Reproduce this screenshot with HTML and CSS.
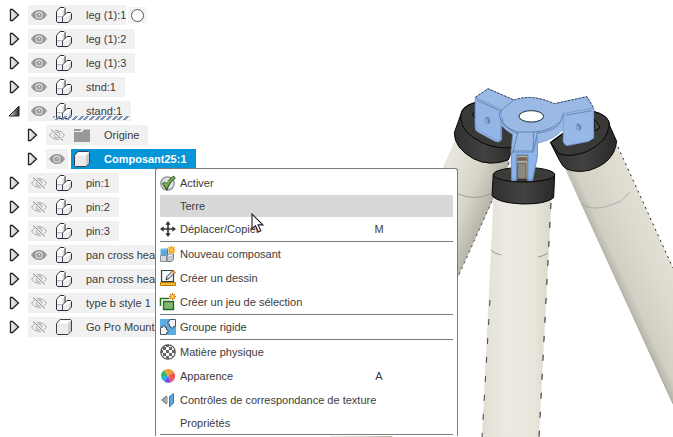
FILE: index.html
```html
<!DOCTYPE html>
<html lang="fr">
<head>
<meta charset="utf-8">
<title>Navigateur de composants</title>
<link rel="stylesheet" href="styles.css">
<script src="app.js" defer></script>
</head>
<body>
<svg width="0" height="0" class="defs" aria-hidden="true">
  <defs>
    <linearGradient id="tri" x2="1"><stop stop-color="#f4f4f4"/><stop offset="1" stop-color="#c4c4c4"/></linearGradient>
    <linearGradient id="dark"><stop stop-color="#eee"/><stop offset="1" stop-color="#222"/></linearGradient>
    <symbol id="closed" viewBox="0 0 12 14"><path d="M2.500 1.500v11h2L10.500 7l-6-5.500z" fill="url(#tri)" stroke="#222" stroke-width="1.300"/></symbol>
    <symbol id="open" viewBox="0 0 12 12"><path d="M11 1v10H1z" fill="url(#dark)" stroke="#222"/></symbol>
    <symbol id="eye" viewBox="0 0 16 12"><path d="M0 6Q3 1 8 1t8 5q-3 5-8 5T0 6z" fill="#999"/><circle cx="8" cy="6" r="3.500" fill="#eee"/><circle cx="8" cy="6" r="2.600" fill="#999"/><circle cx="8.300" cy="5.600" r=".8" fill="#eee"/></symbol>
    <symbol id="eye-off" viewBox="0 0 16 12"><g fill="none" stroke="#a2a2a2"><path d="M.5 6Q3.500 1.500 8 1.500T15.500 6q-3 4.500-7.500 4.500T.5 6z"/><circle cx="8" cy="6" r="2.800"/><path d="M2 .5 14 11.500" stroke="#f1f1f1" stroke-width="2.500"/><path d="M2 .5 14 11.500" stroke="#8d8d8d"/></g></symbol>
    <symbol id="assembly" viewBox="0 0 16 16"><path d="M.5 4.500 4 .5h4l1 1v6l2-2h3.500l1 1V12L12 15.500H1.500l-1-1z" fill="#fff"/><path d="M6.500 4 8.500 2v6l-2 2zM12.500 9.500l2.500-2.500v5l-2.500 3z" fill="#d9dae0"/><path d="M1 10h5v5H1zM7 10h5v5H7z" fill="#ececf1"/><path d="M6.500 10v5M1 9.500h5" stroke="#b5b6bf" fill="none"/><path d="M6.500 15.500V10l2.500-2.500" fill="none" stroke="#4b4b56"/><path d="M.5 4.500 4 .5h4l1 1v6l2-2h3.500l1 1V12L12 15.500H1.500l-1-1z" fill="none" stroke="#2f2f3a"/></symbol>
    <symbol id="body" viewBox="0 0 16 16"><path d="M.5 4.500 4 .5h10.500l1 1V12L12 15.500H1.500l-1-1z" fill="#ebebee" stroke="#3c3c44"/><path d="M1.200 4.500 4.300 1.200H14.500l-2.700 3.300z" fill="#fff"/><path d="m12 4.500 2.900-3v10.300L12 14.800z" fill="#c9cbd0"/></symbol>
    <symbol id="folder" viewBox="0 0 16 14"><path d="M0 4h8l2-2.500h6V14H0zM0 1h7.500L6 3H0z" fill="#999"/></symbol>
  </defs>
</svg>
<main class="workspace">
  <nav class="tree" aria-label="Navigateur">
    <ul id="tree"></ul>
  </nav>
  <svg class="scene" viewBox="330 0 343 437" role="img" aria-label="Trépied">
    <defs>
      <linearGradient id="leg"><stop stop-color="#dfddd2"/><stop offset=".12" stop-color="#e6e3d9"/><stop offset=".4" stop-color="#eceae4"/><stop offset=".75" stop-color="#e8e5db"/><stop offset="1" stop-color="#d9d6c9"/></linearGradient>
      <linearGradient id="legL" gradientUnits="userSpaceOnUse" x1="440" y1="190" x2="495" y2="213"><stop stop-color="#e8e6dc"/><stop offset=".5" stop-color="#d6d3c7"/><stop offset="1" stop-color="#aaa89e"/></linearGradient>
      <linearGradient id="legR" gradientUnits="userSpaceOnUse" x1="590" y1="222" x2="648" y2="195"><stop stop-color="#bbb9ac"/><stop offset=".12" stop-color="#d2d0c4"/><stop offset=".6" stop-color="#dddbd0"/><stop offset="1" stop-color="#e4e1d6"/></linearGradient>
      <linearGradient id="cap"><stop stop-color="#303030"/><stop offset=".5" stop-color="#424242"/><stop offset="1" stop-color="#292929"/></linearGradient>
    </defs>
    <path d="M456 138 433 190 330 437h62l66-160 52-115z" fill="url(#legL)"/>
    <path d="M509 163 458 277" fill="none" stroke="#444" stroke-dasharray="2 4"/>
    <path d="M458 194q16 7 32 0" fill="none" stroke="#8c8a80" stroke-width=".7"/>
    <path d="m566 168 14 32 93 204V268l-56-123z" fill="url(#legR)"/>
    <path d="M566 170 673 404" fill="none" stroke="#8d8c83" stroke-width=".6"/>
    <path d="M618 147 673 268" fill="none" stroke="#222" stroke-dasharray="2 4"/>
    <path d="M581 203q12 11 40-2l9-9" fill="none" stroke="#999" stroke-width=".7"/>
    <path d="M493.500 198 482 437h57l12.500-239z" fill="url(#leg)"/>
    <path d="M551 203 539 437" fill="none" stroke="#222" stroke-dasharray="6 13"/>
    <path d="M490 300 482 437" fill="none" stroke="#444" stroke-dasharray="6 13"/>
    <path d="M491 250q4 4 10 5m37 2q6-1 10-4" fill="none" stroke="#777" stroke-width=".7"/>
    <g transform="translate(440 80) scale(.3333)" stroke="#050505" stroke-width="3" stroke-linejoin="round">
      <path d="M104 68Q65 78 62 105L43 158q-1 45 57 78 49 25 105 4l18-50V110z" fill="url(#cap)"/>
      <path d="M104 68Q62 80 62 112q2 48 68 78 50 20 90 11V85z" fill="#393937"/>
      <path d="M107 92 97 104l9 10" fill="none"/>
      <path d="M460 94q48 12 50 45l20 45q-7 65-83 87-37 8-68-4-12-8-20-25l-28-55z" fill="url(#cap)"/>
      <path d="M460 94q48 12 48 40-4 54-73 83-48 17-80 3l-22-32z" fill="#393937"/>
      <path d="m462 116 18 26-15 11z" fill="#4c4b45"/>
      <path d="m160 282-4 65q18 22 91 25 71 1 94-19l3-70z" fill="url(#cap)"/>
      <ellipse cx="252" cy="284" rx="92" ry="22" fill="#3b3b39"/>
      <path d="M230 225h34v73h-34z" fill="#aaa79c" stroke-width="1.500"/>
      <path d="M233 250h25v46h-25z" fill="#8d8a80" stroke-width="1"/>
      <g stroke="#6f93c4" stroke-width="2">
        <path fill-rule="evenodd" d="m106 52 38-26 78 34q53-20 121 11l98-21 20 34v90l-16 10-60 12q-10 2-15-10v-38q-27 31-78 42v40l-14 72h-15V222h-34v80h-14l-2-85 5-54q-22-11-33-27v42q-4 12-20 6l-50-27q-11-5-10-20zM237 109a37 18 0 1 0 74 0 37 18 0 1 0-74 0z" fill="#9ab9e5"/>
        <path d="m106 52 78 36-3 91q-7 4-16-1l-49-27q-12-8-10-22z" fill="#94b6e6"/>
        <path d="m370 101 91-17v90l-16 10-60 12q-10 2-15-10z" fill="#98b9e8"/>
        <path d="m112 61 70 32m195 13 78-14M187 115q-2 26 47 47m57-2q58-8 72-35m-141-65-36 29q-17 16 3 43 20 18 44 24h48q54-4 80-32 6-9 9-23" fill="none" stroke="#4a6d9b"/>
        <path d="m234 156-14 55v86m61-141-2 57v85M217 213h62m14-58-14 58" fill="none" stroke="#496f9f"/>
        <path d="M229 224v73h-14v-80h64l13-48v60l-15 70h-13v-75z" fill="#8fb4e8" stroke="#5f89c2"/>
        <path d="M234 232h25l4 10h-33z" fill="#74624f" stroke="none"/>
        <ellipse cx="143" cy="121" rx="8" ry="10" fill="#84a9d8"/>
        <ellipse cx="416" cy="141" rx="8" ry="10" fill="#84a9d8"/>
        <path d="M138 113q10 2 9 17M411 134q11 1 10 15" fill="none" stroke="#27496f"/>
      </g>
      <path d="m106 52 38-26 78 34q53-20 121 11l98-21 20 34" fill="none" stroke="#1f3048" stroke-dasharray="7 4" stroke-width="2.500"/>
      <ellipse cx="274" cy="109" rx="37" ry="17" fill="none" stroke="#122" stroke-width="2.500"/>
    </g>
  </svg>

  <div class="menu" role="menu" aria-label="Menu contextuel">
    <button class="item" role="menuitem">
      <svg viewBox="0 0 16 16"><circle cx="7.500" cy="8.500" r="6.700" fill="#dde0e6" stroke="#8d9097" stroke-width="1.300"/><path d="m3.300 7.500 3.300 4.800Q9 5.500 14.800 2" fill="none" stroke="#355c26" stroke-width="3.600"/><path d="m3.800 8 2.800 3.400Q9 5.500 14.300 2.500" fill="none" stroke="#78b64e" stroke-width="2"/></svg>
      <span>Activer</span></button>
    <button class="item item-plain item-hover" role="menuitem"><i></i><span>Terre</span></button>
    <button class="item" role="menuitem">
      <svg viewBox="0 0 16 16"><path d="M8 2v12M2 8h12" stroke="#333" stroke-width="1.600"/><path d="M8 0 5.300 3.700h5.400zM8 16l-2.700-3.700h5.400zM0 8l3.700-2.700v5.400zM16 8l-3.700-2.700v5.400z" fill="#333"/></svg>
      <span>Déplacer/Copier</span><kbd>M</kbd></button>
    <hr>
    <button class="item" role="menuitem">
      <svg viewBox="0 0 16 16"><path d="M.5 3.500 2 2h6v7H.5z" fill="#5ba9e0"/><path d="M.5 3.500 2 2h6L6.500 3.500z" fill="#a9d6f5"/><path d="M7 3.500 8 2.500V8L7 9z" fill="#2e7dbb"/><path d="M.5 9.500h6v6h-6z" fill="#d6dae0" stroke="#8a9099"/><path d="M7 10 9 8h4.500v5.500l-2 2H7z" fill="#c3c8d0" stroke="#777d87"/><path d="M7.500 10 9 8.500h4l-1.500 1.500z" fill="#eef0f3"/><path d="m11.500-1 1 2.300L15 .5 14 3l2 1-2 1 1 2.500-2.500-.8-1 2.300-1-2.300L8 7.500 9 5 7 4l2-1L8 .5l2.500.8z" fill="#f9a51d"/><circle cx="11.500" cy="4" r="1.300" fill="#ffd867"/></svg>
      <span>Nouveau composant</span></button>
    <button class="item" role="menuitem">
      <svg viewBox="0 0 16 16"><path d="M1.500 .5h12v11h-12z" fill="#f4f7fb" stroke="#3a3f46" stroke-width="1.200"/><path d="m6 10 1-3.500L13 .5l2 2-6 6z" fill="#e3e3e3" stroke="#333"/><path d="m12 1.500 1.500-1.500L16 2.500 14.500 4z" fill="#e8932c"/><path d="M.5 12.500h15v3H.5z" fill="#ffd23c" stroke="#b87a05"/><path d="M3 13v1.500m2.500-1.500v1.500m2.500-1.500v1.500m2.500-1.500v1.500m2.500-1.500v1.500" stroke="#b87a05" stroke-width=".7"/></svg>
      <span>Créer un dessin</span></button>
    <button class="item" role="menuitem">
      <svg viewBox="0 0 16 16"><path d="M.5 12V4.500h9" fill="none" stroke="#23731b" stroke-width="1.500"/><path d="M3.500 7.500h10v8h-10z" fill="#82b56d" stroke="#226622" stroke-width="1.300"/><path d="M12.500-1v7M9 2.500h7M10 0l5 5m0-5-5 5" stroke="#d2660f"/><circle cx="12.500" cy="2.500" r="2" fill="#ffd83b" stroke="#d2660f" stroke-width=".7"/></svg>
      <span>Créer un jeu de sélection</span></button>
    <hr>
    <button class="item" role="menuitem">
      <svg viewBox="0 0 16 16"><path d="M0 0h9v8H0z" fill="#5dabe3"/><path d="M6.500 8h9.500v8H6.500z" fill="#5dabe3"/><path d="M9.500.5h6v7h-2V9h-2.500V7.500H9.500V5H8V2.500h1.500zM.5 8.500h2V7H5v1.500h1.500V11H8v2.500H6.500v2h-6z" fill="#f4f5f7" stroke="#4f5862"/></svg>
      <span>Groupe rigide</span></button>
    <hr>
    <button class="item" role="menuitem">
      <svg viewBox="0 0 16 16"><defs><pattern id="check" width="6" height="6" patternUnits="userSpaceOnUse"><path fill="#fff" d="M0 0h6v6H0z"/><path d="M0 0h3v3H0zM3 3h3v3H3z" fill="#666"/></pattern></defs><circle cx="8" cy="8" r="7.200" fill="url(#check)" stroke="#555" stroke-width="1.200"/></svg>
      <span>Matière physique</span></button>
    <button class="item" role="menuitem">
      <svg viewBox="0 0 16 16"><path d="M8 8V1a7 7 0 0 1 6.100 3.500z" fill="#f49a3a"/><path d="m8 8 6.100-3.500a7 7 0 0 1 0 7z" fill="#ef4e4e"/><path d="m8 8 6.100 3.500A7 7 0 0 1 10.500 14.500z" fill="#e84d78"/><path d="m8 8 2.500 6.500a7 7 0 0 1-6-1z" fill="#7147e8"/><path d="m8 8-3.500 5.500A7 7 0 0 1 1 8z" fill="#21b9da"/><path d="M8 8H1a7 7 0 0 1 3-5.700z" fill="#32b86b"/><path d="M8 8 4 2.300A7 7 0 0 1 8 1z" fill="#f2a03c"/></svg>
      <span>Apparence</span><kbd>A</kbd></button>
    <button class="item" role="menuitem">
      <svg viewBox="0 0 16 16"><path d="M7 4 2 8l5 4" fill="none" stroke="#777" stroke-width="1.300"/><path d="M7 5v6Q4.500 10.500 4.500 8T7 5z" fill="#d0d0d0" stroke="#888"/><path d="m9.500 4.500 4-3v9.500l-4 4z" fill="#5ba8df" stroke="#3279b0"/></svg>
      <span>Contrôles de correspondance de texture</span></button>
    <button class="item item-plain" role="menuitem"><i></i><span>Propriétés</span></button>
    <hr>
  </div>
  <svg class="pointer" viewBox="0 0 13 20" aria-hidden="true"><path d="M1 1v15l3.500-3.300L7.300 19l2.500-1.200-2.700-5.900h4.700z" fill="#fff" stroke="#1d1d29" stroke-width="1.100"/></svg>
</main>
</body>
</html>
```
FILE: styles.css
```css
* { box-sizing: border-box; }

body {
  margin: 0;
  background: #fff;
  color: #3c3c3c;
  font: 11px/20px "Liberation Sans", Arial, sans-serif;
  overflow: hidden;
}

.defs { position: absolute; }

.workspace {
  position: relative;
  display: flex;
  align-items: flex-start;
}

.tree {
  flex: 1;
  min-width: 0;
  padding: 5px 0 0 8px;
}

.tree ul {
  display: flex;
  flex-direction: column;
  gap: 4px;
  margin: 0;
  padding: 0;
  list-style: none;
}

.row {
  display: flex;
  align-items: center;
  height: 20px;
  white-space: nowrap;
}

.row-child { padding-left: 18px; }

.toggle {
  display: flex;
  justify-content: center;
  width: 12px;
  margin-right: 8px;
  padding: 0;
  border: 0;
  background: none;
}

.toggle svg { width: 12px; height: 14px; }

.visibility {
  display: flex;
  align-items: center;
  justify-content: center;
  width: 22px;
  height: 20px;
  padding: 0;
  border: 0;
  background: #f1f1f1;
}

.visibility svg { width: 16px; height: 12px; }

.node {
  display: flex;
  align-items: center;
  gap: 14px;
  height: 20px;
  padding: 0 9px 0 6px;
  background: #f1f1f1;
}

.node svg { width: 16px; height: 16px; }

.row-current .node { position: relative; }

.row-current .node::after {
  content: "";
  position: absolute;
  left: 3px;
  right: 2px;
  bottom: 1px;
  height: 4px;
  background: repeating-linear-gradient(135deg, #7d93b6 0 2px, transparent 2px 4px);
}

.row-selected .node {
  margin-left: 3px;
  padding-left: 3px;
  background: #0696d7;
  color: #fff;
  font-weight: bold;
}

.row-root .node { padding-right: 0; }

.row-long .node { padding-right: 40px; }

.marker {
  display: grid;
  place-items: center;
  width: 19px;
  height: 16px;
  margin-left: 2px;
  background: #f4f4f4;
}

.marker::before {
  content: "";
  width: 11px;
  height: 11px;
  border: 1px solid #555;
  border-radius: 50%;
  background: #fff;
}

.scene {
  flex: 0 0 343px;
  display: block;
}

.menu {
  position: absolute;
  left: 155px;
  top: 168px;
  width: 303px;
  padding: 2px 4px 1px;
  border: 1px solid #7b7b7b;
  border-bottom: 0;
  border-radius: 3px 3px 0 0;
  background: #fff;
}

.item {
  display: grid;
  grid-template-columns: 16px 1fr 148px;
  column-gap: 4px;
  align-items: center;
  width: 100%;
  height: 24px;
  padding: 0;
  border: 0;
  background: none;
  color: inherit;
  font: inherit;
  text-align: left;
  white-space: nowrap;
}

.item svg { width: 16px; height: 16px; overflow: visible; }

.item span { min-width: 0; }

.item-plain { height: 22px; }

.item-hover { background: #d8d8d8; }

kbd {
  font: inherit;
  text-align: center;
}

.menu hr {
  height: 1px;
  margin: 0;
  border: 0;
  background: #7b7b7b;
}

.pointer {
  position: absolute;
  left: 251px;
  top: 213px;
  width: 13px;
  height: 20px;
}
```
FILE: app.js
```js
const rows = [
  { name: "leg (1):1", kind: "row-root", marker: true },
  { name: "leg (1):2" },
  { name: "leg (1):3" },
  { name: "stnd:1" },
  { name: "stand:1", kind: "row-current", toggle: "open" },
  { name: "Origine", kind: "row-child", eye: "eye-off", icon: "folder" },
  { name: "Composant25:1", kind: "row-child row-selected", icon: "body" },
  { name: "pin:1", eye: "eye-off" },
  { name: "pin:2", eye: "eye-off" },
  { name: "pin:3", eye: "eye-off" },
  { name: "pan cross hea", kind: "row-long" },
  { name: "pan cross hea", kind: "row-long", eye: "eye-off" },
  { name: "type b style 1", kind: "row-long", eye: "eye-off" },
  { name: "Go Pro Mount t", kind: "row-long", eye: "eye-off", icon: "body" }
];

const use = id => `<svg aria-hidden="true"><use href="#${id}"/></svg>`;

document.getElementById("tree").innerHTML = rows.map(r => `
  <li class="row ${r.kind || ""}">
    <button class="toggle" aria-label="Développer ${r.name}">${use(r.toggle || "closed")}</button>
    <button class="visibility" aria-label="Visibilité ${r.name}">${use(r.eye || "eye")}</button>
    <span class="node">${use(r.icon || "assembly")}<span>${r.name}</span></span>
    ${r.marker ? '<span class="marker"></span>' : ""}
  </li>`).join("");
```
